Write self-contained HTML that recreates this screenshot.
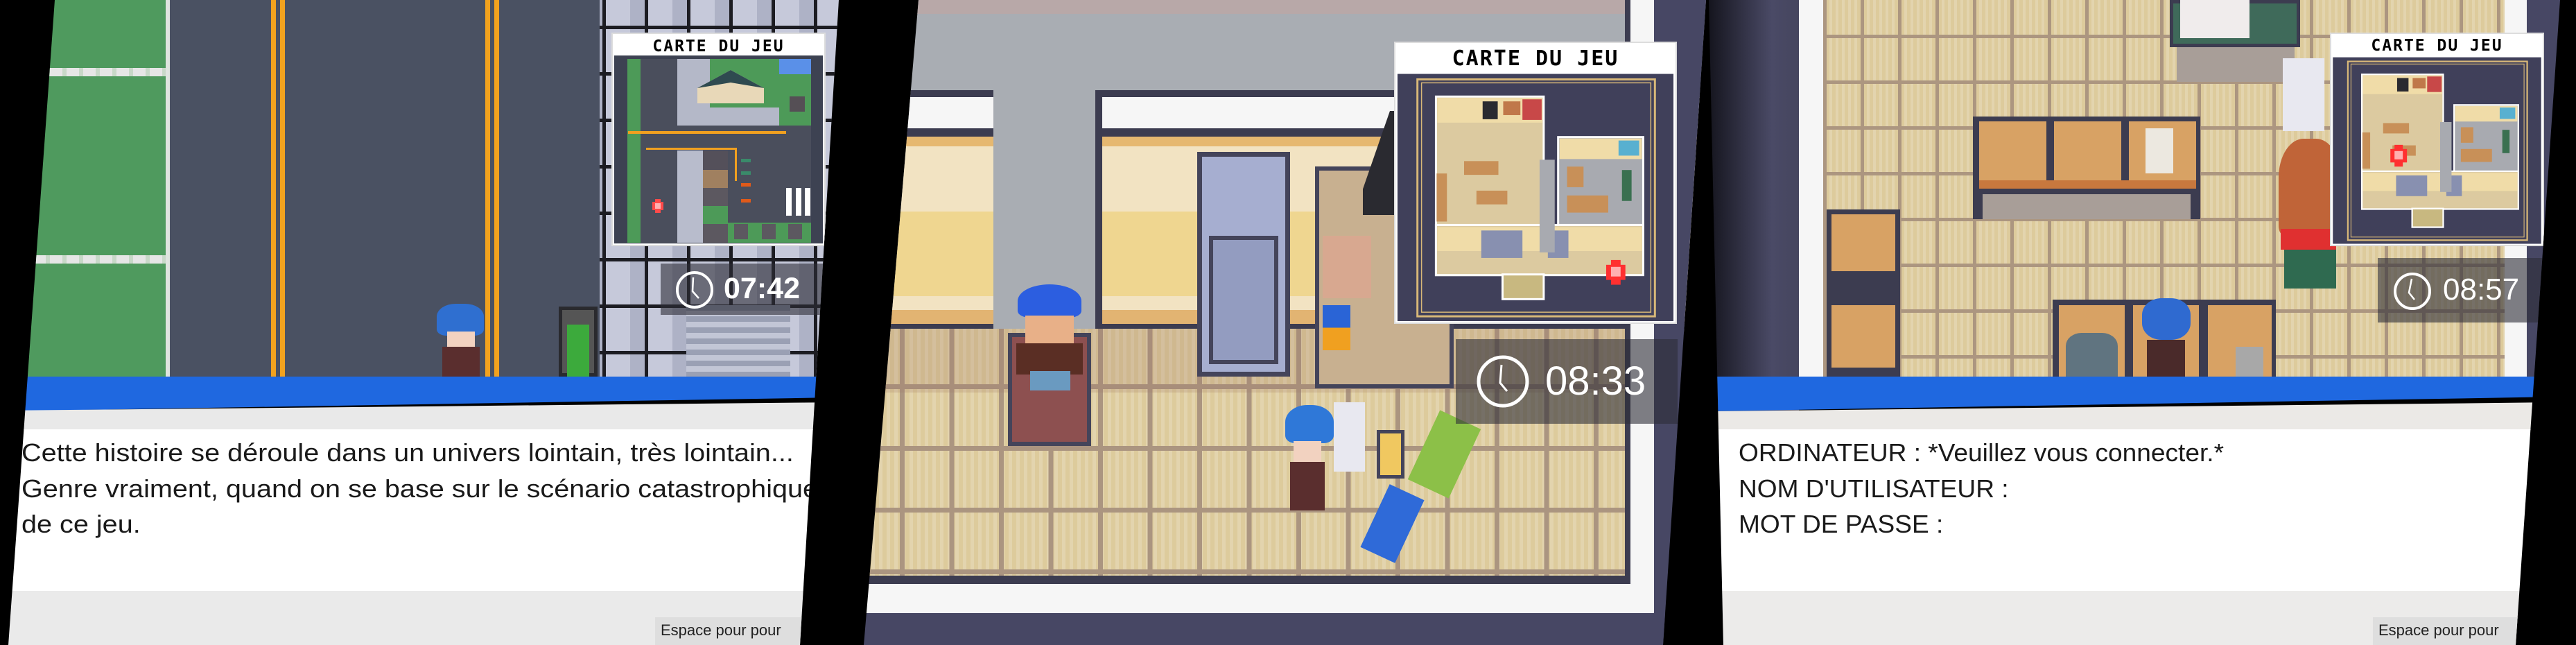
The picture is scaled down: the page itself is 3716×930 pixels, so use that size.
<!DOCTYPE html>
<html><head><meta charset="utf-8">
<style>
*{margin:0;padding:0;box-sizing:border-box}
body{width:3716px;height:930px;background:#000;position:relative;overflow:hidden;font-family:"Liberation Sans",sans-serif}
.p{position:absolute;top:0;height:930px;overflow:hidden}
.a{position:absolute}
.txt{position:absolute;font-family:"Liberation Sans",sans-serif;font-size:36px;line-height:51.5px;color:#1a1a1a;white-space:nowrap;transform-origin:0 0}
.clk{position:absolute;background:rgba(45,45,55,.6)}
.time{position:absolute;color:#fff;font-weight:bold;font-family:"Liberation Sans",sans-serif;white-space:nowrap}
.mm{position:absolute;background:#fff;border:2px solid #ddd}
.mt{position:absolute;left:0;right:0;top:0;text-align:center;font-family:"DejaVu Sans Mono","Liberation Mono",monospace;font-weight:bold;color:#000;letter-spacing:2px}
.esp{position:absolute;background:#dedede;font-size:22px;color:#222;padding:6px 0 0 8px;white-space:nowrap}
</style></head><body>

<!-- PANEL 1 -->
<div class="p" style="left:0;width:1210px;clip-path:polygon(79px 0,1210px 0,1154px 930px,12px 930px)">
  <div class="a" style="left:0;top:0;width:245px;height:543px;background:#4f9a5e"></div>
  <div class="a" style="left:0;top:98px;width:245px;height:12px;background:repeating-linear-gradient(90deg,#e6e6e6 0 18px,#c8d8c8 18px 24px)"></div>
  <div class="a" style="left:0;top:368px;width:245px;height:12px;background:repeating-linear-gradient(90deg,#e6e6e6 0 18px,#c8d8c8 18px 24px)"></div>
  <div class="a" style="left:239px;top:0;width:6px;height:543px;background:#dfe4df"></div>
  <div class="a" style="left:245px;top:0;width:620px;height:543px;background:#4a5162"></div>
  <div class="a" style="left:391px;top:0;width:7px;height:543px;background:#f2a21e"></div>
  <div class="a" style="left:404px;top:0;width:7px;height:543px;background:#f2a21e"></div>
  <div class="a" style="left:700px;top:0;width:7px;height:543px;background:#f2a21e"></div>
  <div class="a" style="left:713px;top:0;width:7px;height:543px;background:#f2a21e"></div>
  <div class="a" style="left:865px;top:0;width:345px;height:543px;background-color:#c6c9da;background-image:linear-gradient(90deg,#1c1c22 5px,transparent 5px),linear-gradient(#1c1c22 5px,transparent 5px),linear-gradient(90deg,transparent 40px,#aeb2c6 40px);background-size:61px 100%,100% 67px,61px 67px;background-position:4px 0,0 37px,4px 0"></div>
  <div class="a" style="left:990px;top:440px;width:150px;height:103px;background:repeating-linear-gradient(#9aa0b4 0 8px,#c2c6d6 8px 16px)"></div>
  <div class="a" style="left:806px;top:442px;width:56px;height:101px;background:#555;border:5px solid #2a2a2e"></div>
  <div class="a" style="left:818px;top:468px;width:32px;height:75px;background:#3caa3c"></div>
  <!-- player -->
  <div class="a" style="left:630px;top:438px;width:68px;height:46px;background:#2f6fd0;border-radius:40% 40% 20% 20%"></div>
  <div class="a" style="left:645px;top:478px;width:40px;height:22px;background:#f2d2c0"></div>
  <div class="a" style="left:638px;top:500px;width:54px;height:43px;background:#5a2e2e"></div>
  <!-- minimap 1 -->
  <div class="mm" style="left:882px;top:47px;width:309px;height:308px">
    <div class="mt" style="font-size:23px;line-height:32px;top:2px">CARTE DU JEU</div>
    <svg class="a" style="left:0;top:0" width="305" height="304" viewBox="0 0 305 304">
      <rect x="2" y="31" width="301" height="271" fill="#3d4252"/>
      <rect x="21" y="36" width="265" height="265" fill="#4a4e5c"/>
      <rect x="21" y="36" width="19" height="265" fill="#4d9a58"/>
      <rect x="93" y="36" width="150" height="96" fill="#b4b8c8"/>
      <rect x="140" y="36" width="100" height="70" fill="#4d9a58"/>
      <polygon points="122,78 170,52 218,78 218,100 122,100" fill="#e8d8b8"/>
      <polygon points="122,78 170,52 218,78 170,70" fill="#2f4a50"/>
      <rect x="240" y="36" width="46" height="22" fill="#5a90e8"/>
      <rect x="240" y="58" width="46" height="74" fill="#4d9a58"/>
      <rect x="255" y="90" width="22" height="22" fill="#554f55"/>
      <rect x="22" y="140" width="228" height="4" fill="#f0a020"/>
      <rect x="48" y="164" width="130" height="3" fill="#f0a020"/>
      <rect x="176" y="164" width="3" height="48" fill="#f0a020"/>
      <rect x="93" y="168" width="37" height="133" fill="#b8bccc"/>
      <rect x="130" y="168" width="36" height="28" fill="#54505a"/>
      <rect x="130" y="196" width="36" height="26" fill="#a08060"/>
      <rect x="130" y="222" width="36" height="26" fill="#5c5860"/>
      <rect x="130" y="248" width="36" height="26" fill="#4d9a58"/>
      <rect x="130" y="274" width="36" height="27" fill="#5c5860"/>
      <rect x="166" y="272" width="120" height="29" fill="#4d9a58"/>
      <rect x="175" y="274" width="20" height="22" fill="#5c5860"/><rect x="215" y="274" width="20" height="22" fill="#5c5860"/><rect x="253" y="274" width="20" height="22" fill="#5c5860"/>
      <rect x="250" y="222" width="8" height="40" fill="#fff"/><rect x="264" y="222" width="8" height="40" fill="#fff"/><rect x="277" y="222" width="8" height="40" fill="#fff"/>
      <rect x="185" y="180" width="14" height="5" fill="#3a8a6a"/><rect x="185" y="198" width="14" height="5" fill="#3a8a6a"/><rect x="185" y="215" width="14" height="5" fill="#e05a1a"/><rect x="185" y="238" width="14" height="5" fill="#e05a1a"/>
      <rect x="57" y="242" width="16" height="12" fill="#ff4a4a"/><rect x="61" y="238" width="8" height="20" fill="#ff4a4a"/><rect x="61" y="244" width="8" height="8" fill="#ffb0b0"/>
    </svg>
  </div>
  <div class="clk" style="left:953px;top:380px;width:241px;height:74px"></div>
  <svg class="a" style="left:972px;top:390px" width="60" height="60" viewBox="0 0 60 60"><circle cx="30" cy="28" r="25" fill="none" stroke="#fff" stroke-width="4"/><path d="M28 10 L27 30 L36 40" fill="none" stroke="#fff" stroke-width="2.5"/></svg>
  <div class="time" style="left:1044px;top:392px;font-size:43px">07:42</div>
  <!-- dialog -->
  <div class="a" style="left:0;top:543px;width:1210px;height:50px;background:#1f68e0;clip-path:polygon(0 0,100% 0,100% 30px,0 50px)"></div>
  <div class="a" style="left:0;top:580px;width:1210px;height:40px;background:#e9e9e9;clip-path:polygon(0 12px,100% 0,100% 100%,0 100%)"></div>
  <div class="a" style="left:0;top:619px;width:1210px;height:233px;background:#fff"></div>
  <div class="a" style="left:0;top:852px;width:1210px;height:78px;background:#eaeaea"></div>
  <div class="txt" style="left:31px;top:627px;transform:scaleX(1.1)">Cette histoire se déroule dans un univers lointain, très lointain...<br>Genre vraiment, quand on se base sur le scénario catastrophique<br>de ce jeu.</div>
  <div class="esp" style="left:945px;top:890px;width:265px;height:40px">Espace pour pour</div>
</div>

<!-- PANEL 2 -->
<div class="p" style="left:1246px;width:1215px;clip-path:polygon(79px 0,1215px 0,1153px 930px,0 930px)">
  <div class="a" style="left:0;top:0;width:1215px;height:480px;background:#a9adb3"></div>
  <div class="a" style="left:0;top:0;width:1100px;height:20px;background:#b8a8a8"></div>
  <div class="a" style="left:0;top:130px;width:1215px;height:10px;background:#3c3c50"></div>
  <div class="a" style="left:0;top:140px;width:1215px;height:45px;background:#f6f6f6"></div>
  <div class="a" style="left:0;top:185px;width:1215px;height:12px;background:#3c3c50"></div>
  <div class="a" style="left:0;top:197px;width:1215px;height:277px;background:linear-gradient(#e6b870 0 14px,#f2e3c2 14px 108px,#efd690 108px 230px,#f2e3c2 230px 250px,#e2b472 250px 270px,#3c3c50 270px)"></div>
  <div class="a" style="left:187px;top:130px;width:154px;height:344px;background:#a9adb3"></div>
  <div class="a" style="left:334px;top:130px;width:10px;height:344px;background:#3c3c50"></div>
  <div class="a" style="left:0;top:474px;width:1100px;height:356px;background-color:#ddcb9c;background-image:linear-gradient(90deg,#ab9580 7px,transparent 7px),linear-gradient(#ab9580 7px,transparent 7px),repeating-linear-gradient(90deg,rgba(255,255,255,.18) 0 5px,transparent 5px 11px);background-size:71.5px 100%,100% 89px,100% 100%;background-position:52px 0,0 80px,0 0"></div>
  <div class="a" style="left:0;top:474px;width:1100px;height:92px;background:rgba(160,120,100,.22)"></div>
  <div class="a" style="left:481px;top:219px;width:134px;height:324px;background:#a6aed0;border:7px solid #44445a"></div>
  <div class="a" style="left:498px;top:340px;width:100px;height:185px;background:#939cc0;border:6px solid #44445a"></div>
  <div class="a" style="left:651px;top:240px;width:200px;height:320px;background:#c8b090;border:6px solid #44445a"></div>
  <div class="a" style="left:662px;top:340px;width:70px;height:90px;background:#d8a890"></div>
  <div class="a" style="left:662px;top:440px;width:40px;height:65px;background:linear-gradient(#2a64d6 50%,#f0a020 50%)"></div>
  <div class="a" style="left:720px;top:160px;width:130px;height:150px;background:#2a2a30;clip-path:polygon(30% 0,100% 0,100% 100%,0 100%,0 75%)"></div>
  <div class="a" style="left:208px;top:480px;width:120px;height:163px;background:#8d5050;border:6px solid #44445a"></div>
  <div class="a" style="left:222px;top:410px;width:92px;height:48px;background:#2c5ee0;border-radius:50% 50% 20% 20%"></div>
  <div class="a" style="left:233px;top:455px;width:70px;height:40px;background:#e8b088"></div>
  <div class="a" style="left:220px;top:495px;width:96px;height:45px;background:#5a2e24"></div>
  <div class="a" style="left:240px;top:535px;width:58px;height:28px;background:#6a9ac0"></div>
  <div class="a" style="left:608px;top:584px;width:70px;height:55px;background:#2f78d8;border-radius:45% 45% 20% 20%"></div>
  <div class="a" style="left:620px;top:636px;width:40px;height:30px;background:#f2d2c0"></div>
  <div class="a" style="left:615px;top:666px;width:50px;height:70px;background:#5a2e2e"></div>
  <div class="a" style="left:678px;top:580px;width:45px;height:100px;background:#e8e8f0"></div>
  <div class="a" style="left:740px;top:620px;width:40px;height:70px;background:#f0c860;border:5px solid #44445a"></div>
  <div class="a" style="left:805px;top:600px;width:65px;height:110px;background:#8cc048;transform:rotate(25deg)"></div>
  <div class="a" style="left:735px;top:705px;width:55px;height:100px;background:#2f6ad8;transform:rotate(25deg)"></div>
  <div class="a" style="left:1098px;top:0;width:8px;height:930px;background:#3c3c50"></div>
  <div class="a" style="left:1106px;top:0;width:34px;height:930px;background:#f6f6f6"></div>
  <div class="a" style="left:1140px;top:0;width:75px;height:930px;background:#474764"></div>
  <div class="a" style="left:0;top:830px;width:1106px;height:12px;background:#3c3c50"></div>
  <div class="a" style="left:0;top:842px;width:1140px;height:42px;background:#f6f6f6"></div>
  <div class="a" style="left:0;top:884px;width:1215px;height:46px;background:#474764"></div>
  <div class="mm" style="left:765px;top:60px;width:408px;height:407px">
    <div class="mt" style="font-size:30px;line-height:42px;top:2px">CARTE DU JEU</div>
    <svg class="a" style="left:0;top:0" width="404" height="403" viewBox="0 0 408 407" preserveAspectRatio="none">
      <rect x="3" y="45" width="402" height="360" fill="#40405a"/>
      <rect x="32" y="53" width="346" height="345" fill="none" stroke="#d8b878" stroke-width="3"/>
      <rect x="38" y="58" width="334" height="334" fill="none" stroke="#d8b878" stroke-width="1.5"/>
      <rect x="59" y="78" width="157" height="260" fill="#dccaa0" stroke="#fff" stroke-width="3"/>
      <rect x="61" y="80" width="153" height="36" fill="#f0dca8"/>
      <rect x="127" y="85" width="22" height="26" fill="#2a2a30"/><rect x="157" y="85" width="25" height="20" fill="#c0784a"/><rect x="185" y="82" width="28" height="30" fill="#c84848"/>
      <rect x="237" y="137" width="124" height="200" fill="#a8aab0" stroke="#fff" stroke-width="3"/>
      <rect x="239" y="139" width="120" height="30" fill="#f0dca8"/>
      <rect x="325" y="142" width="30" height="22" fill="#58b0d0"/>
      <rect x="59" y="265" width="302" height="73" fill="#dccaa0" stroke="#fff" stroke-width="3"/>
      <rect x="61" y="268" width="298" height="35" fill="#f0dca8"/>
      <rect x="125" y="273" width="60" height="40" fill="#8890b0"/><rect x="222" y="273" width="30" height="40" fill="#8890b0"/>
      <rect x="210" y="170" width="22" height="135" fill="#a8aab0"/>
      <rect x="100" y="172" width="50" height="20" fill="#c89058"/><rect x="118" y="215" width="45" height="20" fill="#c89058"/><rect x="60" y="190" width="15" height="70" fill="#c89058"/>
      <rect x="250" y="180" width="24" height="30" fill="#c89058"/><rect x="250" y="222" width="60" height="25" fill="#c89058"/><rect x="330" y="185" width="14" height="45" fill="#3a7050"/>
      <rect x="156" y="337" width="60" height="36" fill="#c8b880" stroke="#fff" stroke-width="3"/>
      <rect x="307" y="323" width="28" height="22" fill="#ff3030"/><rect x="314" y="316" width="14" height="36" fill="#ff3030"/><rect x="314" y="326" width="14" height="14" fill="#ffb0b0"/>
    </svg>
  </div>
  <div class="clk" style="left:854px;top:489px;width:320px;height:122px"></div>
  <svg class="a" style="left:880px;top:508px" width="84" height="84" viewBox="0 0 84 84"><circle cx="42" cy="42" r="35" fill="none" stroke="#fff" stroke-width="5"/><path d="M40 18 L38 44 L48 56" fill="none" stroke="#fff" stroke-width="3"/></svg>
  <div class="time" style="left:983px;top:516px;font-size:58px;font-weight:normal">08:33</div>
</div>

<!-- PANEL 3 -->
<div class="p" style="left:2465px;width:1228px;clip-path:polygon(0 0,1228px 0,1164px 930px,21px 930px)">
  <div class="a" style="left:0;top:0;width:130px;height:930px;background:linear-gradient(90deg,#15151e,#4a4a66 70%,#45455e)"></div>
  <div class="a" style="left:130px;top:0;width:35px;height:543px;background:#f6f6f6"></div>
  <div class="a" style="left:165px;top:0;width:983px;height:543px;background-color:#ddcb9c;background-image:linear-gradient(90deg,#ac9680 5px,transparent 5px),linear-gradient(#ac9680 5px,transparent 5px),repeating-linear-gradient(90deg,rgba(255,255,255,.18) 0 4px,transparent 4px 9px);background-size:54px 100%,100% 66px,100% 100%;background-position:0 0,0 50px,0 0"></div>
  <div class="a" style="left:1148px;top:0;width:32px;height:543px;background:#f6f6f6"></div>
  <div class="a" style="left:1180px;top:0;width:48px;height:543px;background:#474764"></div>
  <div class="a" style="left:665px;top:0;width:188px;height:68px;background:#3f6a5a;border:5px solid #3c3c50"></div>
  <div class="a" style="left:680px;top:0;width:100px;height:55px;background:#f0ecec"></div>
  <div class="a" style="left:675px;top:68px;width:170px;height:50px;background:#a89e98"></div>
  <div class="a" style="left:381px;top:168px;width:328px;height:148px;background:#3c3c50"></div>
  <div class="a" style="left:390px;top:175px;width:97px;height:85px;background:#d8a264"></div>
  <div class="a" style="left:498px;top:175px;width:97px;height:85px;background:#d8a264"></div>
  <div class="a" style="left:606px;top:175px;width:97px;height:85px;background:#d8a264"></div>
  <div class="a" style="left:390px;top:260px;width:313px;height:12px;background:#c8783e"></div>
  <div class="a" style="left:395px;top:280px;width:300px;height:36px;background:#a89e98"></div>
  <div class="a" style="left:630px;top:185px;width:40px;height:65px;background:#ece8e0"></div>
  <div class="a" style="left:170px;top:302px;width:106px;height:241px;background:#3c3c50"></div>
  <div class="a" style="left:177px;top:309px;width:92px;height:82px;background:#d8a264"></div>
  <div class="a" style="left:177px;top:440px;width:92px;height:90px;background:#d8a264"></div>
  <div class="a" style="left:496px;top:432px;width:322px;height:111px;background:#3c3c50"></div>
  <div class="a" style="left:505px;top:440px;width:95px;height:103px;background:#d8a264"></div>
  <div class="a" style="left:612px;top:440px;width:95px;height:103px;background:#d8a264"></div>
  <div class="a" style="left:720px;top:440px;width:92px;height:103px;background:#d8a264"></div>
  <div class="a" style="left:515px;top:480px;width:75px;height:63px;background:#607480;border-radius:30% 30% 0 0"></div>
  <div class="a" style="left:625px;top:430px;width:70px;height:60px;background:#2f6ad0;border-radius:40%"></div>
  <div class="a" style="left:632px;top:490px;width:55px;height:53px;background:#4a2a2a"></div>
  <div class="a" style="left:828px;top:84px;width:60px;height:105px;background:#e8e8f0"></div>
  <div class="a" style="left:822px;top:200px;width:90px;height:140px;background:#c06438;border-radius:40% 40% 10% 10%"></div>
  <div class="a" style="left:825px;top:330px;width:80px;height:30px;background:#e03030"></div>
  <div class="a" style="left:830px;top:360px;width:75px;height:56px;background:#2f6a50"></div>
  <div class="a" style="left:760px;top:500px;width:40px;height:43px;background:#a8a8a8"></div>
  <div class="mm" style="left:896px;top:47px;width:309px;height:308px">
    <div class="mt" style="font-size:23px;line-height:32px;top:1px">CARTE DU JEU</div>
    <svg class="a" style="left:0;top:0" width="305" height="304" viewBox="0 0 408 407" preserveAspectRatio="none">
      <rect x="3" y="45" width="402" height="360" fill="#40405a"/>
      <rect x="32" y="53" width="346" height="345" fill="none" stroke="#d8b878" stroke-width="3"/>
      <rect x="38" y="58" width="334" height="334" fill="none" stroke="#d8b878" stroke-width="1.5"/>
      <rect x="59" y="78" width="157" height="260" fill="#dccaa0" stroke="#fff" stroke-width="3"/>
      <rect x="61" y="80" width="153" height="36" fill="#f0dca8"/>
      <rect x="127" y="85" width="22" height="26" fill="#2a2a30"/><rect x="157" y="85" width="25" height="20" fill="#c0784a"/><rect x="185" y="82" width="28" height="30" fill="#c84848"/>
      <rect x="237" y="137" width="124" height="200" fill="#a8aab0" stroke="#fff" stroke-width="3"/>
      <rect x="239" y="139" width="120" height="30" fill="#f0dca8"/>
      <rect x="325" y="142" width="30" height="22" fill="#58b0d0"/>
      <rect x="59" y="265" width="302" height="73" fill="#dccaa0" stroke="#fff" stroke-width="3"/>
      <rect x="61" y="268" width="298" height="35" fill="#f0dca8"/>
      <rect x="125" y="273" width="60" height="40" fill="#8890b0"/><rect x="222" y="273" width="30" height="40" fill="#8890b0"/>
      <rect x="210" y="170" width="22" height="135" fill="#a8aab0"/>
      <rect x="100" y="172" width="50" height="20" fill="#c89058"/><rect x="118" y="215" width="45" height="20" fill="#c89058"/><rect x="60" y="190" width="15" height="70" fill="#c89058"/>
      <rect x="250" y="180" width="24" height="30" fill="#c89058"/><rect x="250" y="222" width="60" height="25" fill="#c89058"/><rect x="330" y="185" width="14" height="45" fill="#3a7050"/>
      <rect x="156" y="337" width="60" height="36" fill="#c8b880" stroke="#fff" stroke-width="3"/>
      <rect x="114" y="222" width="32" height="26" fill="#ff3030"/><rect x="122" y="214" width="16" height="42" fill="#ff3030"/><rect x="122" y="226" width="16" height="16" fill="#ffb0b0"/>
    </svg>
  </div>
  <div class="clk" style="left:965px;top:372px;width:240px;height:93px"></div>
  <svg class="a" style="left:984px;top:390px" width="60" height="60" viewBox="0 0 60 60"><circle cx="31" cy="30" r="25" fill="none" stroke="#fff" stroke-width="4"/><path d="M30 12 L26 32 L34 42" fill="none" stroke="#fff" stroke-width="2.5"/></svg>
  <div class="time" style="left:1059px;top:393px;font-size:44px;font-weight:normal">08:57</div>
  <div class="a" style="left:0;top:543px;width:1228px;height:50px;background:#1f68e0;clip-path:polygon(0 0,100% 0,100% 29px,0 50px)"></div>
  <div class="a" style="left:0;top:580px;width:1228px;height:40px;background:#ebe9e6;clip-path:polygon(0 13px,100% 0,100% 100%,0 100%)"></div>
  <div class="a" style="left:0;top:619px;width:1228px;height:233px;background:#fff"></div>
  <div class="a" style="left:0;top:852px;width:1228px;height:78px;background:#ecebea"></div>
  <div class="txt" style="left:43px;top:627px;transform:scaleX(1.03)">ORDINATEUR : *Veuillez vous connecter.*<br>NOM D'UTILISATEUR :<br>MOT DE PASSE :</div>
  <div class="esp" style="left:958px;top:890px;width:270px;height:40px">Espace pour pour</div>
</div>
</body></html>
